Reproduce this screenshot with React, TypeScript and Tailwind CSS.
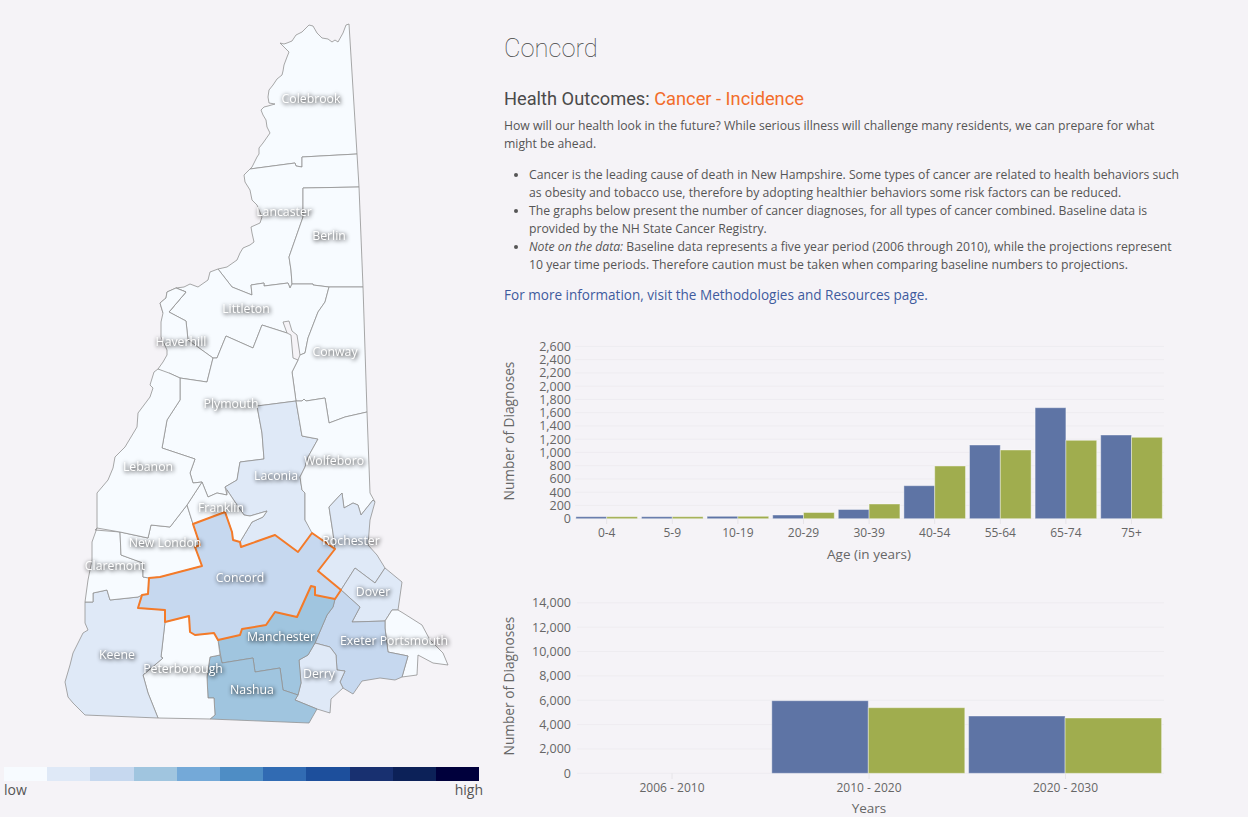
const LOW = '#f7fbff';
const L1 = '#dfe9f7';
const L2 = '#c6d8ef';
const L3 = '#a0c5df';

// town regions, in page pixels
const REGIONS: { fill: string; d: string }[] = [
  { fill: LOW, d: '280,43 284,44 287,43 292,41 296,35 302,32 309,25 313,26 317,33 322,38 328,39 332,42 335,40 338,42 343,33 346,25 349,24 357,154 302,157 302,167 296,166 295,163 250,169 252,167 254,163 257,157 259,154 259,148 263,143 270,133 267,127 266,120 263,115 261,110 264,107 268,106 275,104 269,103 268,97 269,90 273,85 277,79 282,75 283,71 284,65 287,57 289,52' },
  { fill: LOW, d: '250,169 295,163 296,166 302,167 302,157 357,154 359,187 303,188 303,217 289,257 291,270 292,284 290,288 288,283 264,286 264,283 251,285 252,295 232,287 218,269 227,267 237,260 240,253 243,248 250,245 254,242 252,233 251,227 260,223 262,217 257,205 252,200 250,190 245,182 244,175' },
  { fill: LOW, d: '303,188 359,187 363,287 329,287 313,285 313,284 292,284 291,270 289,257 303,217' },
  { fill: LOW, d: '218,269 210,272 208,280 198,287 190,284 184,287 176,288 167,292 166,298 160,303 163,313 169,312 186,292 176,288 186,292 169,312 186,321 188,340 213,358 217,358 226,336 253,348 262,325 287,333 283,322 289,321 292,331 297,335 300,355 305,353 308,338 318,312 325,302 329,287 313,285 313,284 292,284 290,288 288,283 264,286 264,283 251,285 252,295 232,287' },
  { fill: LOW, d: '176,288 186,292 169,312 186,321 188,340 213,358 207,382 180,378 169,373 168,375 158,369 163,362 167,355 167,350 161,337 161,322 163,313 160,303 166,298 167,292' },
  { fill: LOW, d: '329,287 363,287 367,412 345,417 329,423 325,398 306,401 304,399 302,401 296,401 292,372 298,360 300,355 305,353 308,338 318,312 325,302' },
  { fill: LOW, d: '226,336 253,348 262,325 287,333 291,335 293,358 298,360 292,372 296,401 257,406 262,433 264,459 240,462 237,480 225,487 227,495 217,493 208,497 202,482 193,483 190,473 195,459 162,448 167,420 180,400 180,378 207,382 213,358 217,358' },
  { fill: L1, d: '257,406 296,401 302,436 318,439 308,457 305,467 300,477 302,490 305,493 305,510 305,520 313,532 312,533 298,552 275,535 241,547 240,542 243,537 252,522 263,517 267,511 250,516 244,515 237,505 227,490 225,487 237,480 240,462 264,459 262,433' },
  { fill: LOW, d: '302,436 296,401 302,401 304,399 306,401 325,398 329,423 345,417 367,412 370,493 375,502 373,500 361,515 358,505 353,503 344,508 342,493 329,507 333,533 335,549 312,533 305,520 305,510 305,493 302,490 300,477 305,467 308,457 318,439' },
  { fill: L1, d: '329,507 342,493 344,508 353,503 358,505 361,515 373,500 375,502 370,520 368,545 377,555 385,568 375,583 355,568 341,590 318,571 335,549 333,533' },
  { fill: L1, d: '385,568 375,583 355,568 341,590 360,607 352,622 385,621 392,610 398,610 402,582' },
  { fill: LOW, d: '392,610 398,610 403,613 422,625 430,640 443,653 448,665 433,663 418,655 417,675 402,677 408,656 388,652 385,628 385,621' },
  { fill: L2, d: '341,590 360,607 352,622 385,621 385,628 388,652 408,656 402,677 395,680 380,678 362,681 353,694 343,688 340,682 345,671 337,670 336,655 330,647 315,643 327,615 333,607 335,599' },
  { fill: L1, d: '315,643 330,647 336,655 337,670 345,671 340,682 343,688 331,699 330,713 317,709 295,700 298,695 301,683 299,660 308,655' },
  { fill: L3, d: '335,599 333,607 327,615 315,643 308,655 299,660 301,683 298,695 283,690 280,668 255,672 253,658 222,663 218,640 240,635 242,629 266,625 275,612 297,617 311,586 315,587 315,595' },
  { fill: L3, d: '222,663 253,658 255,672 280,668 283,690 298,695 295,700 317,709 309,723 210,719 215,715 214,698 208,698 207,677 210,657 220,655' },
  { fill: LOW, d: '165,622 161,657 163,658 143,675 148,693 158,718 210,719 215,715 214,698 208,698 207,677 210,657 220,655 218,640 214,633 195,635 190,632 189,616' },
  { fill: L1, d: '165,622 165,610 138,608 142,595 138,597 110,600 107,590 93,593 93,602 85,602 85,623 88,630 83,633 73,653 70,665 65,682 68,697 73,703 85,715 158,718 148,693 143,675 163,658 161,657' },
  { fill: LOW, d: '95,530 120,532 121,555 143,563 143,577 149,578 148,594 142,595 138,597 110,600 107,590 93,593 93,602 85,602 88,580 92,560 92,542 97,528' },
  { fill: LOW, d: '120,532 148,538 151,525 170,527 187,505 193,524 200,545 195,547 202,566 160,577 149,578 143,577 143,563 121,555' },
  { fill: LOW, d: '202,482 208,497 217,493 227,495 227,490 237,505 244,515 250,516 267,511 263,517 252,522 243,537 240,542 233,540 232,532 225,512 193,524 187,505' },
  { fill: LOW, d: '180,378 180,400 167,420 162,448 195,459 190,473 193,483 202,482 187,505 170,527 151,525 148,538 120,532 97,528 97,508 97,493 108,480 113,468 115,457 125,447 137,427 138,413 150,397 153,388 150,385 154,372 158,369 169,373' },
];

const CONCORD =
  '275,535 298,552 312,533 335,549 318,571 341,590 335,599 315,595 315,587 311,586 297,617 275,612 266,625 242,629 240,635 218,640 214,633 195,635 190,632 189,616 165,622 165,610 138,608 142,595 148,594 149,578 160,577 202,566 195,547 200,545 193,524 225,512 232,532 233,540 240,542 241,547';

const TOWNS: [string, number, number][] = [
  ['Colebrook', 311, 103],
  ['Lancaster', 284, 216],
  ['Berlin', 329, 240],
  ['Littleton', 246, 313],
  ['Haverhill', 181, 346],
  ['Conway', 335, 356],
  ['Plymouth', 231, 408],
  ['Wolfeboro', 334, 465],
  ['Lebanon', 148, 471],
  ['Laconia', 276, 480],
  ['Franklin', 221, 512],
  ['Rochester', 351, 545],
  ['New London', 165, 547],
  ['Claremont', 115, 570],
  ['Concord', 240, 582],
  ['Dover', 373, 596],
  ['Manchester', 281, 641],
  ['Exeter Portsmouth', 394, 645],
  ['Keene', 117, 659],
  ['Peterborough', 183, 673],
  ['Derry', 319, 678],
  ['Nashua', 252, 694],
];

const SCALE = ['#f7fbff', '#dfe9f7', '#c6d8ef', '#a0c5df', '#74a9d8', '#4e8dc5', '#316bb3', '#1d4f9c', '#183070', '#0c2158', '#00003c'];

function MapPanel() {
  return (
    <div className="w-[504px] shrink-0">
      <svg viewBox="0 0 504 767" className="block h-[767px] w-[504px]">
        {REGIONS.map((r, i) => (
          <polygon key={i} points={r.d} fill={r.fill} stroke="#929292" strokeWidth="0.8" strokeLinejoin="round" />
        ))}
        <polygon points={CONCORD} fill={L2} stroke="#f47a28" strokeWidth="2" strokeLinejoin="round" />
        <g className="[filter:drop-shadow(1px_1px_2px_#000)]">
          {TOWNS.map(([name, x, y]) => (
            <text key={name} x={x} y={y} textAnchor="middle" fill="#fff" className="text-[12.3px] [font-family:'Open_Sans',sans-serif]">
              {name}
            </text>
          ))}
        </g>
      </svg>
      <div className="ml-[4px] flex h-[14px] w-[475px]">
        {SCALE.map((c) => (
          <div key={c} className="flex-1" style={{ backgroundColor: c }} />
        ))}
      </div>
      <div className="ml-[4px] flex w-[479px] justify-between text-[14px] leading-[18px] text-[#555]">
        <span>low</span>
        <span>high</span>
      </div>
    </div>
  );
}

const BLUE = '#5e74a5';
const GREEN = '#a0ad4e';

function Bar({ x, w, top, base, fill }: { x: number; w: number; top: number; base: number; fill: string }) {
  return <rect x={x} y={top} width={w} height={base - top} fill={fill} stroke="#fff" strokeOpacity="0.4" strokeWidth="1" />;
}

const AGES: [string, number, number][] = [
  ['0-4', 517.7, 517.7],
  ['5-9', 517.7, 517.7],
  ['10-19', 517.3, 517.3],
  ['20-29', 516, 513.5],
  ['30-39', 510.5, 505],
  ['40-54', 486.7, 467],
  ['55-64', 446, 451],
  ['65-74', 408.7, 441.3],
  ['75+', 436, 438.3],
];

function AgeChart() {
  const ticks = Array.from({ length: 14 }, (_, i) => i * 200);
  return (
    <svg viewBox="495 330 720 240" className="-ml-[9px] block h-[240px] w-[720px] [font-family:'Open_Sans',sans-serif]">
      {ticks.map((t) => {
        const y = 519.7 - (t / 2600) * 172.3;
        return (
          <g key={t}>
            <line x1="575" x2="1164" y1={y} y2={y} stroke="#eeecf0" />
            <text x="571" y={y + 4.5} textAnchor="end" fill="#666" className="text-[12.5px]">
              {t.toLocaleString('en-US')}
            </text>
          </g>
        );
      })}
      {AGES.map(([label, a, b], i) => {
        const cx = 606.7 + i * 65.6;
        return (
          <g key={label}>
            <line x1={cx} x2={cx} y1="519.7" y2="525" stroke="#e6e4e8" />
            <Bar x={cx - 30.8} w={30.8} top={a} base={519.7} fill={BLUE} />
            <Bar x={cx} w={30.8} top={b} base={519.7} fill={GREEN} />
            <text x={cx} y="537.5" textAnchor="middle" fill="#666" className="text-[12px]">
              {label}
            </text>
          </g>
        );
      })}
      <text x="869" y="560" textAnchor="middle" fill="#666" className="text-[13.5px]">
        Age (in years)
      </text>
      <text transform="translate(514 432) rotate(-90)" textAnchor="middle" fill="#666" className="text-[13.7px]">
        Number of Diagnoses
      </text>
    </svg>
  );
}

function YearChart() {
  const ticks = Array.from({ length: 8 }, (_, i) => i * 2000);
  const labels: [string, number][] = [
    ['2006 - 2010', 672],
    ['2010 - 2020', 869],
    ['2020 - 2030', 1065.5],
  ];
  return (
    <svg viewBox="495 590 720 227" className="-ml-[9px] mt-[20px] block h-[227px] w-[720px] [font-family:'Open_Sans',sans-serif]">
      {ticks.map((t) => {
        const y = 774.3 - (t / 14000) * 170.5;
        return (
          <g key={t}>
            <line x1="577" x2="1164" y1={y} y2={y} stroke="#eeecf0" />
            <text x="571" y={y + 4.5} textAnchor="end" fill="#666" className="text-[12.5px]">
              {t.toLocaleString('en-US')}
            </text>
          </g>
        );
      })}
      {labels.map(([label, cx]) => (
        <g key={label}>
          <line x1={cx} x2={cx} y1="774.3" y2="780" stroke="#e6e4e8" />
          <text x={cx} y="792.5" textAnchor="middle" fill="#666" className="text-[12px]">
            {label}
          </text>
        </g>
      ))}
      <Bar x={771.8} w={96.5} top={701.7} base={774.3} fill={BLUE} />
      <Bar x={868.3} w={96.5} top={708.7} base={774.3} fill={GREEN} />
      <Bar x={968.6} w={96.5} top={717} base={774.3} fill={BLUE} />
      <Bar x={1065.1} w={96.5} top={719} base={774.3} fill={GREEN} />
      <text x="869" y="814" textAnchor="middle" fill="#666" className="text-[13.5px]">
        Years
      </text>
      <text transform="translate(514 687) rotate(-90)" textAnchor="middle" fill="#666" className="text-[13.7px]">
        Number of Diagnoses
      </text>
    </svg>
  );
}

export default function App() {
  return (
    <div className="flex h-[817px] w-[1248px] overflow-hidden bg-[#f5f3f7] font-['Open_Sans',sans-serif] text-[#555]">
      <MapPanel />
      <div className="w-[700px] shrink-0">
        <h1 className="pt-[32px] font-['Roboto',sans-serif] text-[25.5px] font-thin leading-[32px] text-[#444]">Concord</h1>
        <h2 className="mt-[24px] font-['Roboto',sans-serif] text-[18.25px] leading-[22px] text-[#4a4a4a]">
          Health Outcomes: <span className="text-[#f26d2b]">Cancer - Incidence</span>
        </h2>
        <p className="mt-[7px] w-[680px] text-[12.22px] leading-[18px]">
          How will our health look in the future? While serious illness will challenge many residents, we can prepare for what might be ahead.
        </p>
        <ul className="mt-[13px] w-[680px] list-disc pl-[25px] text-[12.22px] leading-[18px]">
          <li>
            Cancer is the leading cause of death in New Hampshire. Some types of cancer are related to health behaviors such as obesity and tobacco use, therefore by adopting healthier behaviors some risk factors can be reduced.
          </li>
          <li>
            The graphs below present the number of cancer diagnoses, for all types of cancer combined. Baseline data is provided by the NH State Cancer Registry.
          </li>
          <li>
            <em>Note on the data:</em> Baseline data represents a five year period (2006 through 2010), while the projections represent 10 year time periods. Therefore caution must be taken when comparing baseline numbers to projections.
          </li>
        </ul>
        <p className="mt-[12px] text-[13.56px] leading-[18px] text-[#3f5b9e]">For more information, visit the Methodologies and Resources page.</p>
        <div className="mt-[25px]">
          <AgeChart />
          <YearChart />
        </div>
      </div>
    </div>
  );
}
